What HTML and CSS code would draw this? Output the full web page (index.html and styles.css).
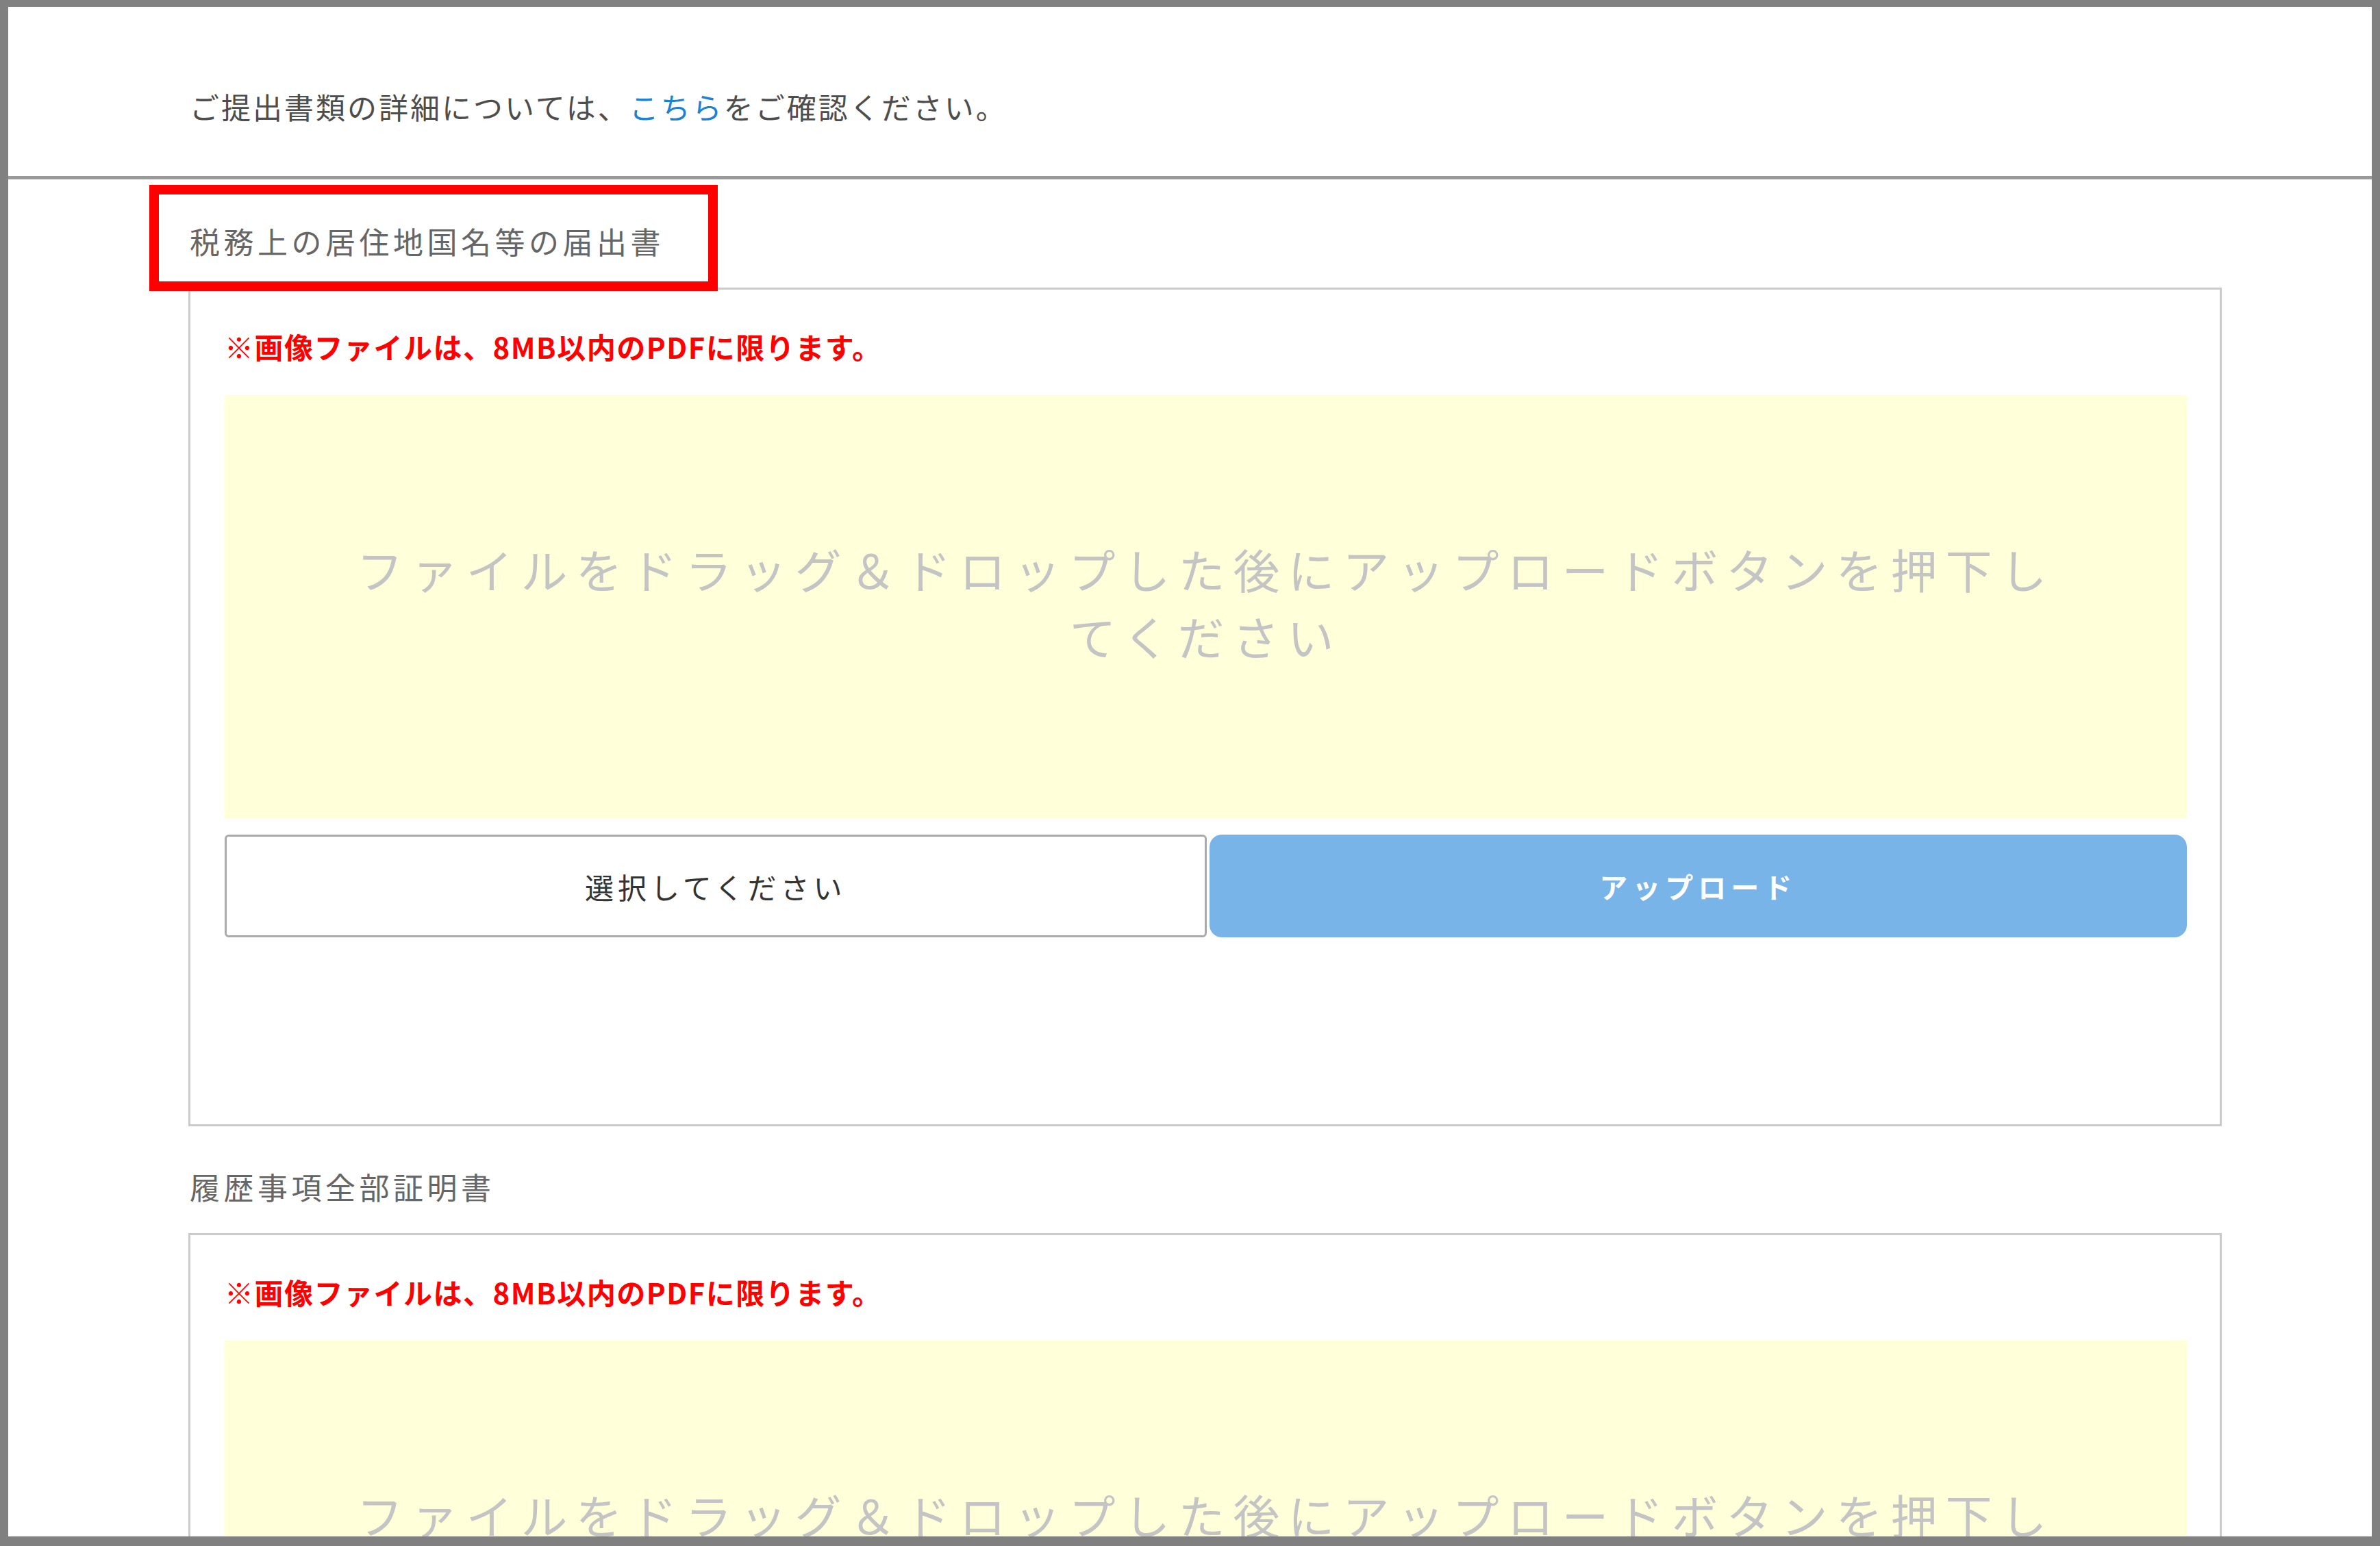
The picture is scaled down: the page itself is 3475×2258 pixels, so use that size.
FILE: index.html
```html
<!DOCTYPE html>
<html lang="ja">
<head>
  <meta charset="UTF-8">
  <meta name="viewport" content="width=device-width, initial-scale=1.0">
  <title>ご提出書類のアップロード</title>
  <link rel="stylesheet" href="styles.css">
</head>
<body>

<div class="frame">
  <div class="intro">
    <p>ご提出書類の詳細については、<a href="#">こちら</a>をご確認ください。</p>
  </div>

  <div class="documents">
    <div class="doc">
      <h2 class="doc-title">税務上の居住地国名等の届出書<span class="mark"></span></h2>
      <div class="upload-card">
        <p class="note">※画像ファイルは、8MB以内のPDFに限ります。</p>
        <div class="drop-zone">
          <p>ファイルをドラッグ＆ドロップした後にアップロードボタンを押下してください</p>
        </div>
        <div class="actions">
          <button class="btn-select">選択してください</button>
          <button class="btn-upload">アップロード</button>
        </div>
      </div>
    </div>

    <div class="doc">
      <h2 class="doc-title">履歴事項全部証明書</h2>
      <div class="upload-card">
        <p class="note">※画像ファイルは、8MB以内のPDFに限ります。</p>
        <div class="drop-zone">
          <p>ファイルをドラッグ＆ドロップした後にアップロードボタンを押下してください</p>
        </div>
        <div class="actions">
          <button class="btn-select">選択してください</button>
          <button class="btn-upload">アップロード</button>
        </div>
      </div>
    </div>
  </div>
</div>

</body>
</html>
```

FILE: styles.css
```css
body {
  margin: 0;
  padding: 0;
  font-family: "Noto Sans CJK JP", "Noto Sans", sans-serif;
  background-color: #fff;
  color: #4a4a4a;
}

.frame {
  height: 100vh;
  box-sizing: border-box;
  border: 12px solid #808080;
  border-top-width: 10px;
  border-bottom-width: 14px;
  overflow: hidden;
}

.intro {
  padding: 115px 0 72px 265px;
  border-bottom: 5px solid #9a9a9a;
}

.intro p {
  margin: 0;
  font-size: 43px;
  line-height: 60px;
  letter-spacing: 3px;
  color: #4d4d4d;
}

.intro a {
  color: #1e82d2;
  text-decoration: none;
}

.documents {
  padding-left: 263px;
  width: 2969px;
}

.doc {
  padding-top: 60px;
}

.doc + .doc {
  padding-top: 58px;
}

.doc-title {
  position: relative;
  margin: 0 0 38px 2px;
  font-size: 44px;
  font-weight: normal;
  line-height: 60px;
  letter-spacing: 5.5px;
  color: #666;
}

/* annotation box drawn over the heading */
.doc-title .mark {
  position: absolute;
  left: -59px;
  top: -52px;
  width: 830px;
  height: 155px;
  box-sizing: border-box;
  border: 14px solid #ff0000;
  z-index: 1;
}

.upload-card {
  border: 3px solid #cbcbcb;
  padding: 55px 48px 273px 50px;
}

.note {
  margin: 0 0 43px;
  font-size: 42px;
  font-weight: bold;
  line-height: 56px;
  letter-spacing: 1.5px;
  color: #ff0000;
}

.drop-zone {
  height: 618px;
  background-color: #ffffda;
  display: flex;
  align-items: center;
  justify-content: center;
  padding: 0 172px 12px;
  box-sizing: border-box;
}

.drop-zone p {
  margin: 0;
  font-size: 68px;
  line-height: 98px;
  letter-spacing: 12px;
  text-align: center;
  color: #c4c4c4;
}

.actions {
  display: flex;
  gap: 4px;
  margin-top: 24px;
}

.actions button {
  flex: 1;
  height: 150px;
  font-family: inherit;
  cursor: pointer;
}

.btn-select {
  background-color: #fff;
  border: 3px solid #aaa;
  border-radius: 6px;
  font-size: 42px;
  letter-spacing: 6px;
  color: #333;
}

.btn-upload {
  background-color: #78b4e8;
  border: none;
  border-radius: 18px;
  font-size: 41px;
  font-weight: bold;
  letter-spacing: 7px;
  color: #fff;
}
```
